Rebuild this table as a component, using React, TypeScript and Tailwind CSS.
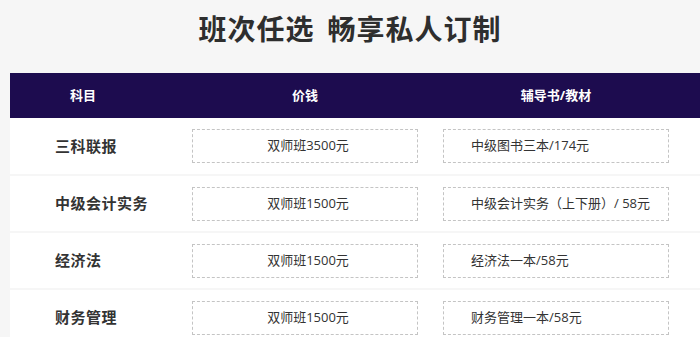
const rows = [
  { subject: '三科联报', price: '双师班3500元', book: '中级图书三本/174元' },
  { subject: '中级会计实务', price: '双师班1500元', book: '中级会计实务（上下册）/ 58元' },
  { subject: '经济法', price: '双师班1500元', book: '经济法一本/58元' },
  { subject: '财务管理', price: '双师班1500元', book: '财务管理一本/58元' },
]

const font = { fontFamily: '"Open Sans", "Noto Sans CJK SC", sans-serif' }

export default function App() {
  return (
    <div className="w-[700px] h-[337px] overflow-hidden bg-[#f6f6f6] text-[#333]" style={font}>
      <h1 className="pt-[10px] h-[73px] flex justify-center gap-[13px] text-[28px] leading-[38px] font-bold tracking-[1px] text-[#2e2e2e]">
        <span>班次任选</span>
        <span>畅享私人订制</span>
      </h1>
      <div className="ml-[10px]">
        <div className="flex items-center h-[45px] bg-[#1d0c4f] text-white text-[13px] font-bold">
          <div className="w-[182px] pr-[36px] text-center">科目</div>
          <div className="w-[226px] text-center">价钱</div>
          <div className="ml-[25px] w-[226px] text-center">辅导书/教材</div>
        </div>
        <div className="flex flex-col gap-[2px]">
          {rows.map((r, i) => (
            <div key={r.subject} className={`flex items-center bg-white ${i === 0 ? 'h-[56px]' : 'h-[55px]'}`}>
              <div className="w-[182px] pl-[45px] text-[15px] font-bold tracking-[0.5px] text-[#333]">{r.subject}</div>
              <div className="w-[226px] h-[34px] flex items-center justify-center pl-[6px] border border-dashed border-[#c4c4c4] text-[13px] text-[#333]">
                {r.price}
              </div>
              <div className="ml-[25px] w-[226px] h-[34px] flex items-center pl-[27px] border border-dashed border-[#c4c4c4] text-[13px] text-[#333]">
                {r.book}
              </div>
            </div>
          ))}
        </div>
      </div>
    </div>
  )
}
